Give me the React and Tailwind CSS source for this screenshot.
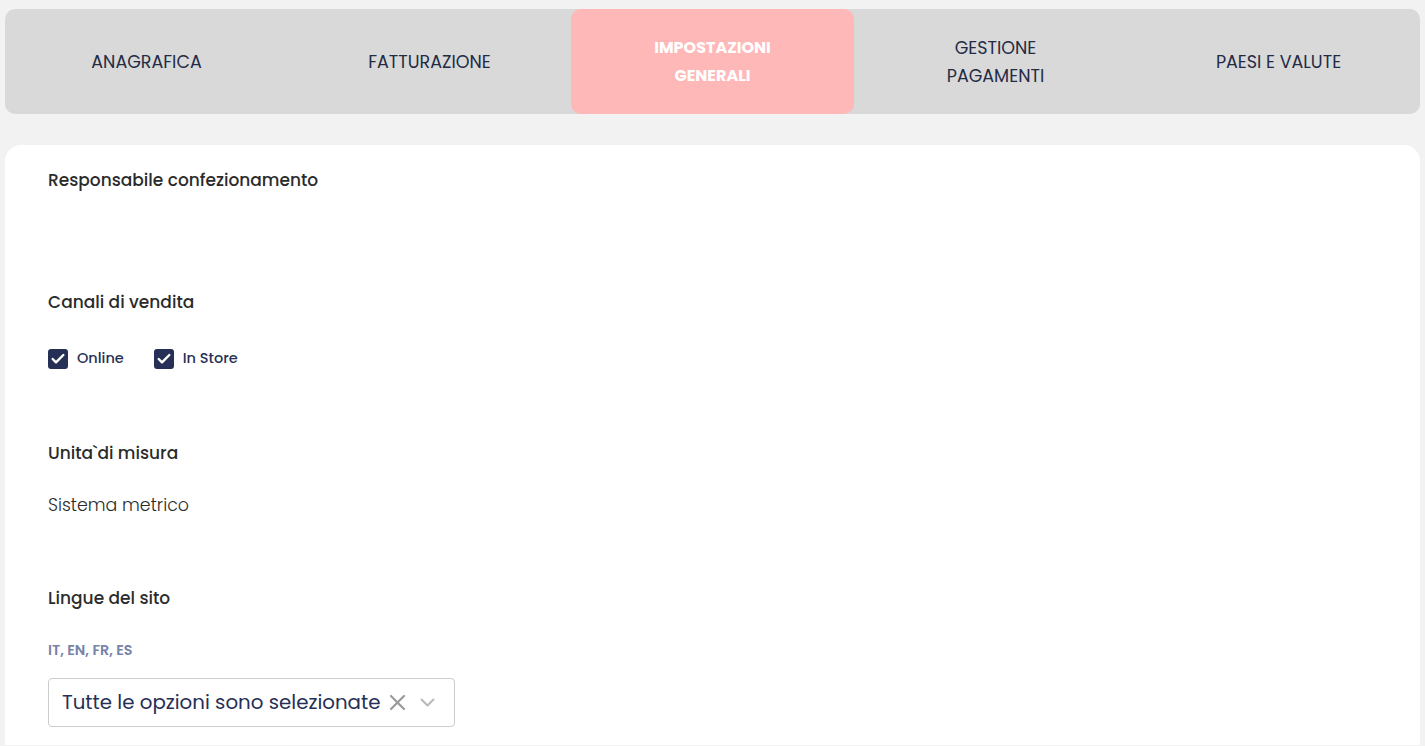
import { Check } from "lucide-react";

const tabs = [
  { label: "ANAGRAFICA" },
  { label: "FATTURAZIONE" },
  { label: "IMPOSTAZIONI GENERALI", active: true },
  { label: "GESTIONE PAGAMENTI" },
  { label: "PAESI E VALUTE" },
];

const font = { fontFamily: "Poppins, 'Open Sans', 'Noto Sans', sans-serif" };

const Checkbox = ({ label }) => (
  <label className="flex items-center gap-[9px]">
    <span className="flex h-5 w-5 items-center justify-center rounded-[3px] bg-[#263056]">
      <Check size={16} strokeWidth={3.6} className="text-white" />
    </span>
    <span className="text-[14.5px] font-medium text-[#263056]">{label}</span>
  </label>
);

const Heading = ({ children, className = "" }) => (
  <h3 className={`text-[17px] font-medium leading-6 text-[#2b2b2b] ${className}`}>
    {children}
  </h3>
);

export default function App() {
  return (
    <div className="min-h-screen bg-[#f2f2f2] px-[5px] pt-[9px]" style={font}>
      <nav className="grid h-[105px] grid-cols-5 rounded-[10px] bg-[#d9d9d9]">
        {tabs.map((t) => (
          <button
            key={t.label}
            className={`flex items-center justify-center rounded-[10px] px-4 ${
              t.active ? "bg-[#ffb8b8]" : ""
            }`}
          >
            <span
              className={`max-w-[160px] text-center leading-7 ${
                t.active
                  ? "text-[16px] font-bold text-white"
                  : "text-[17.5px] text-[#232b45]"
              }`}
            >
              {t.label}
            </span>
          </button>
        ))}
      </nav>

      <main className="mt-[31px] min-h-[600px] rounded-t-[16px] bg-white px-[43px] pt-[23px]">
        <Heading>Responsabile confezionamento</Heading>

        <Heading className="mt-[98px]">Canali di vendita</Heading>
        <div className="mt-[34px] flex gap-[30px]">
          <Checkbox label="Online" />
          <Checkbox label="In Store" />
        </div>

        <Heading className="mt-[71px]">Unita`di misura</Heading>
        <p className="mt-[28px] text-[17.4px] font-light leading-6 text-[#2b2b2b]">
          Sistema metrico
        </p>

        <Heading className="mt-[69px]">Lingue del sito</Heading>
        <p className="mt-[30px] text-[14.3px] font-semibold leading-5 text-[#7783a8]">
          IT, EN, FR, ES
        </p>
        <div className="mt-[18px] flex h-[49px] w-[407px] items-center rounded-[4px] border border-[#cccccc] pl-[13px] pr-[19px]">
          <span className="flex-1 whitespace-nowrap text-[19.8px] leading-6 text-[#263056]">
            Tutte le opzioni sono selezionate
          </span>
          <svg width="17" height="17" viewBox="0 0 17 17" className="shrink-0">
            <path
              d="M2 2 L15 15 M15 2 L2 15"
              stroke="#9a9a9a"
              strokeWidth="2.2"
              strokeLinecap="round"
            />
          </svg>
          <svg width="15" height="9" viewBox="0 0 15 9" className="ml-[14px] shrink-0">
            <path
              d="M1.5 1.5 L7.5 7.5 L13.5 1.5"
              stroke="#b8b8b8"
              strokeWidth="2"
              fill="none"
              strokeLinecap="round"
              strokeLinejoin="round"
            />
          </svg>
        </div>
      </main>
    </div>
  );
}
